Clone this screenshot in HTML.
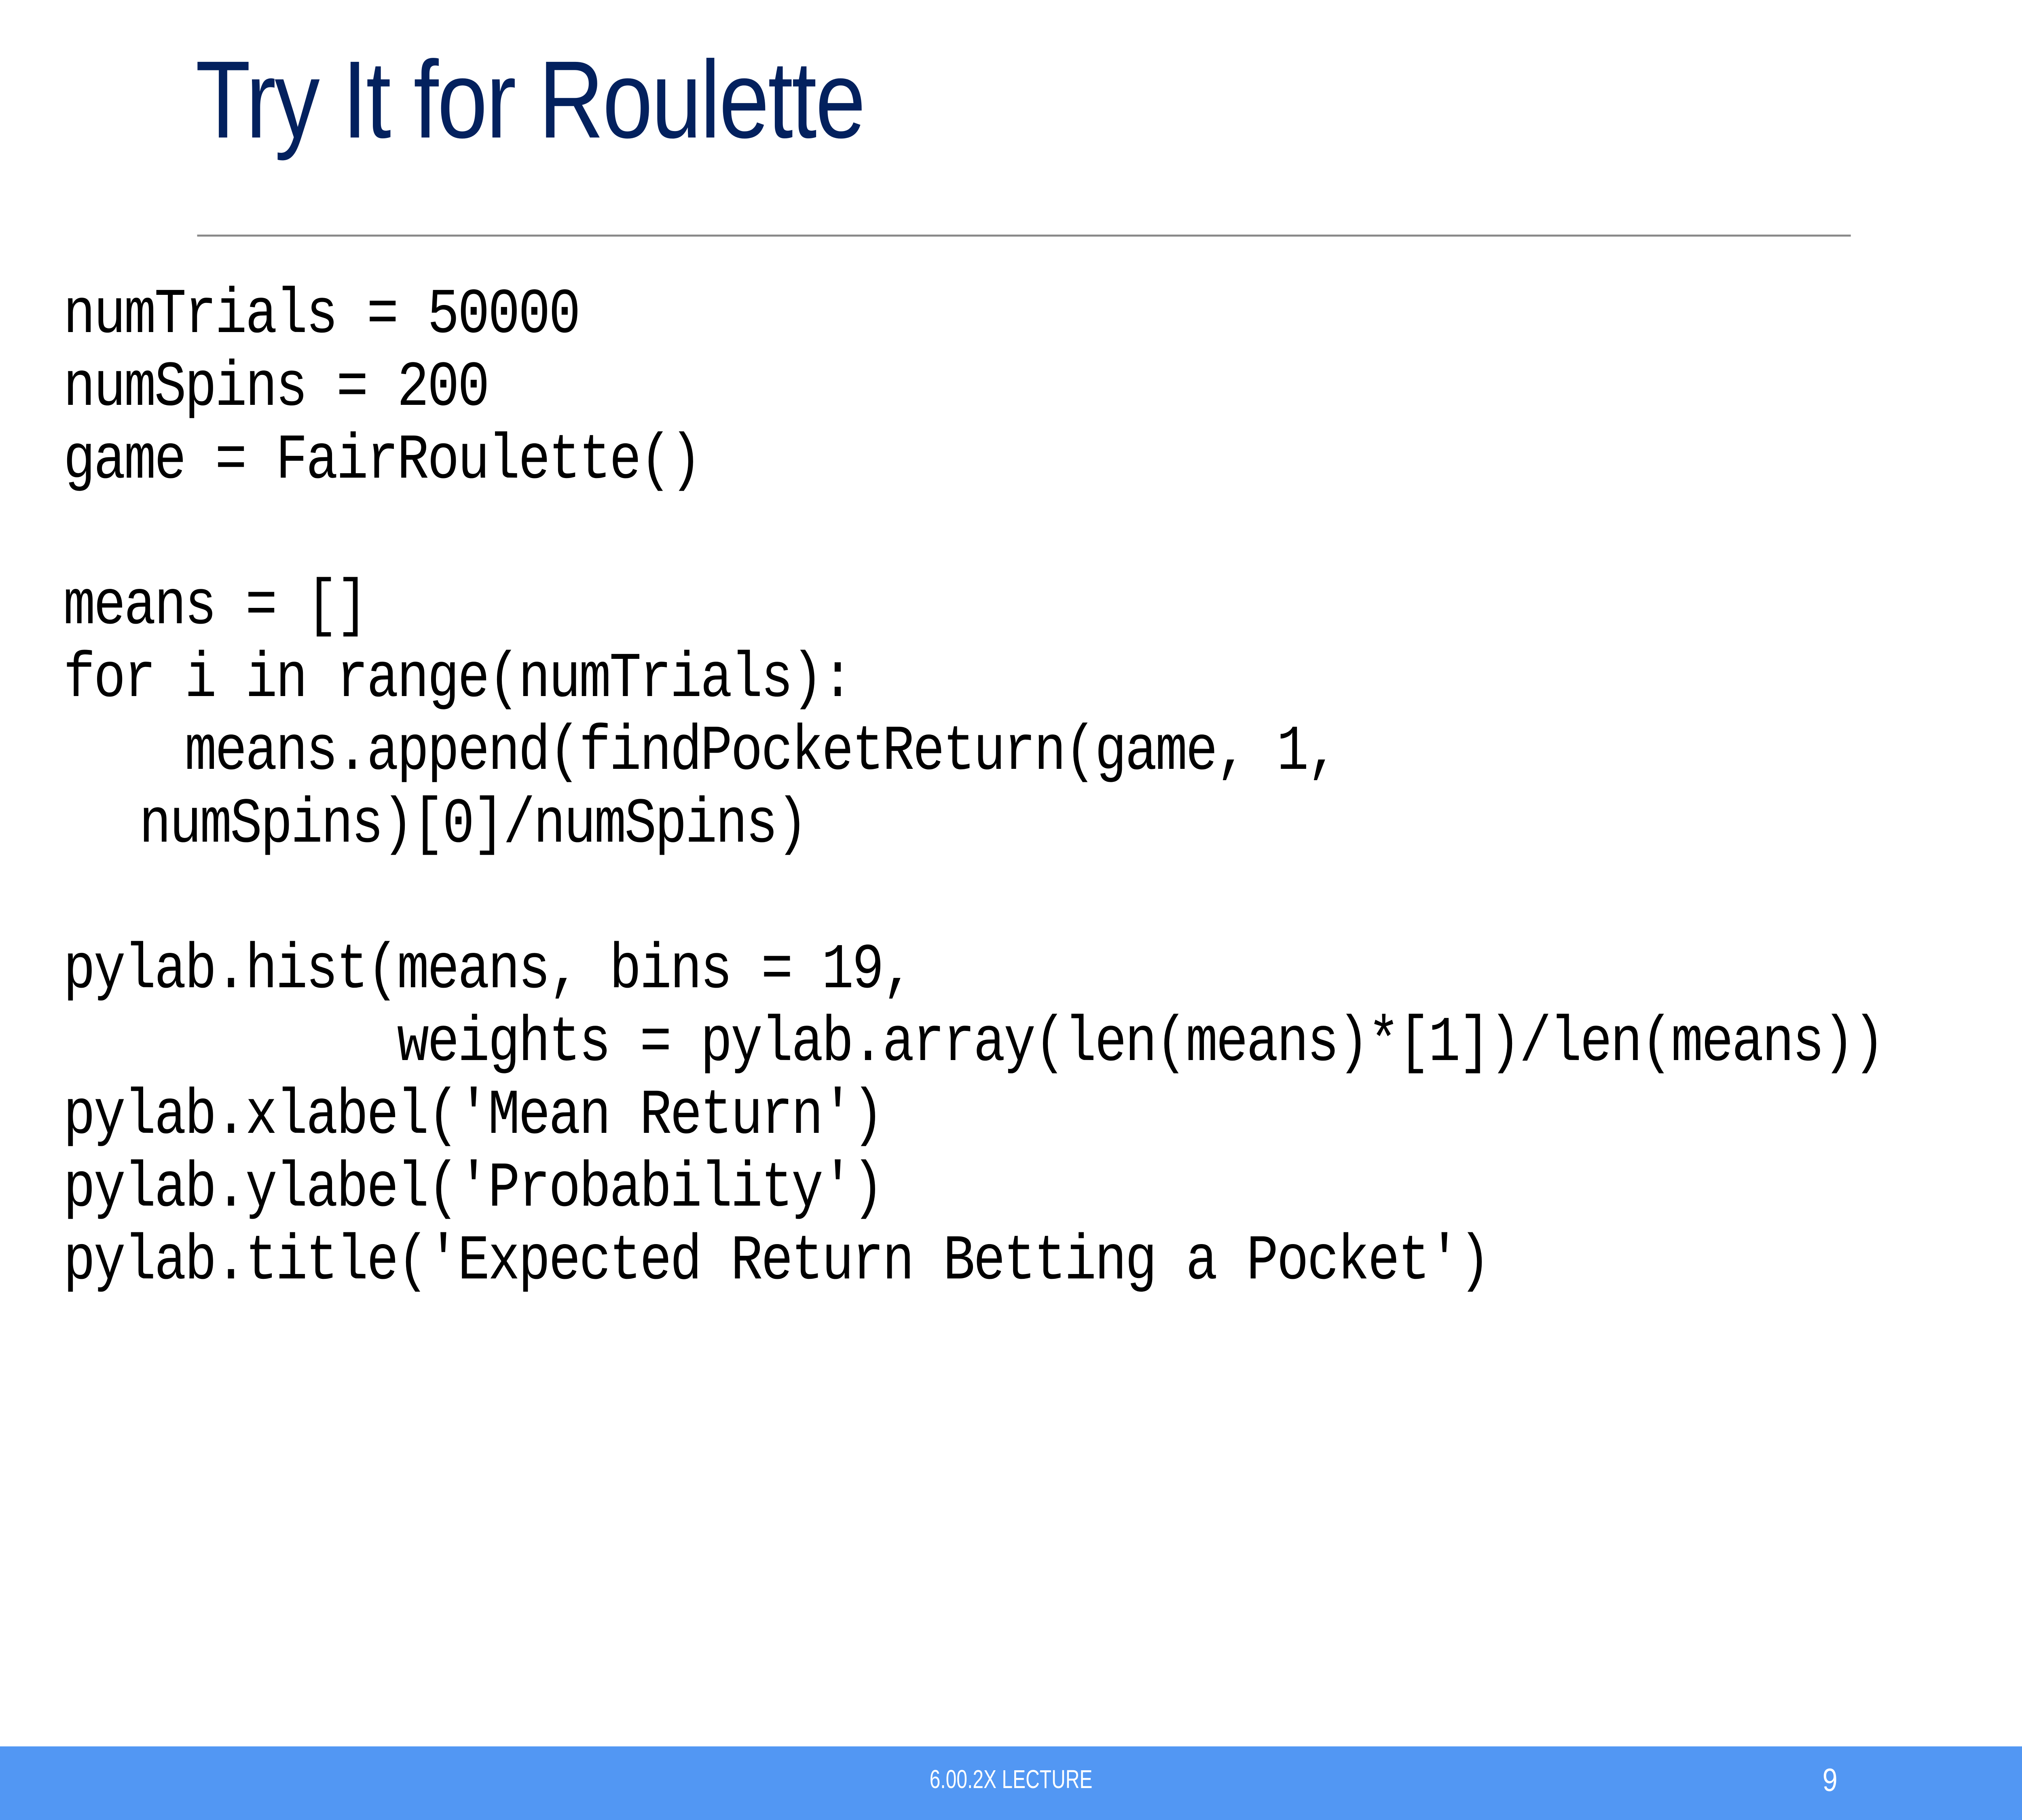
<!DOCTYPE html>
<html><head><meta charset="utf-8"><style>
html,body{margin:0;padding:0;overflow:hidden;background:#fff;}
#w{position:absolute;left:0;top:0;width:6000px;height:4500px;transform:scale(0.833333,1);transform-origin:0 0;}
#title{position:absolute;left:580px;top:110px;font-family:"Liberation Sans",sans-serif;font-size:272px;color:#03215e;white-space:nowrap;transform:scaleX(0.985);transform-origin:left top;line-height:1;letter-spacing:-4px;}
#rule{position:absolute;left:585px;top:580px;width:4907px;height:5px;background:#8a8a8a;}
#code{position:absolute;left:188px;top:690px;font-family:"Liberation Mono",monospace;font-size:158px;letter-spacing:-4.8px;line-height:180px;color:#000;white-space:pre;margin:0;}
#code span{padding-left:225px;}
#foot{position:absolute;left:0;top:4318px;width:6000px;height:182px;background:#5297f3;}
#ft{position:absolute;left:2500px;width:1000px;text-align:center;top:4362px;font-family:"Liberation Sans",sans-serif;font-size:64px;color:#fff;transform:scaleX(0.9);}
#pg{position:absolute;left:5408px;top:4355px;font-family:"Liberation Sans",sans-serif;font-size:80px;color:#fff;}
</style></head><body>
<div id="w">
<div id="title">Try It for Roulette</div>
<div id="rule"></div>
<pre id="code">numTrials = 50000
numSpins = 200
game = FairRoulette()

means = []
for i in range(numTrials):
    means.append(findPocketReturn(game, 1,
<span>numSpins)[0]/numSpins)</span>

pylab.hist(means, bins = 19,
           weights = pylab.array(len(means)*[1])/len(means))
pylab.xlabel('Mean Return')
pylab.ylabel('Probability')
pylab.title('Expected Return Betting a Pocket')</pre>
<div id="foot"></div>
<div id="ft">6.00.2X LECTURE</div>
<div id="pg">9</div>
</div>
</body></html>
